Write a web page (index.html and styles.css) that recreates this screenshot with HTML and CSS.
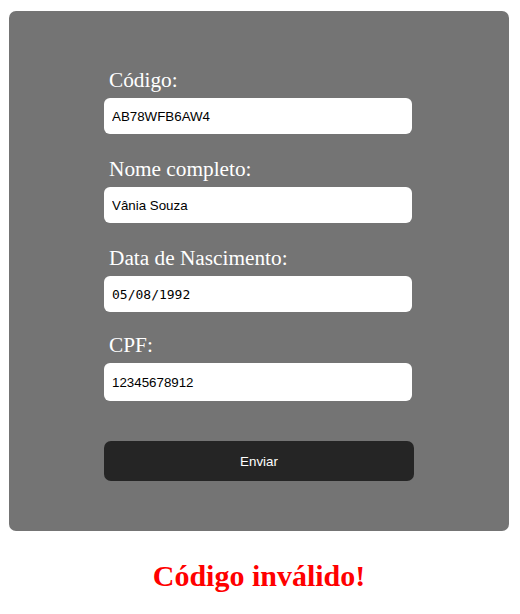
FILE: index.html
```html
<!DOCTYPE html>
<html lang="pt-BR">
<head>
<meta charset="utf-8">
<title>Cadastro</title>
<link rel="stylesheet" href="styles.css">
</head>
<body>
<main class="page">
  <form class="card">
    <div class="fields">
      <div class="field">
        <label class="label" for="codigo">Código:</label>
        <input class="input" id="codigo" type="text" value="AB78WFB6AW4">
      </div>
      <div class="field">
        <label class="label" for="nome">Nome completo:</label>
        <input class="input" id="nome" type="text" value="Vânia Souza">
      </div>
      <div class="field field-tight">
        <label class="label" for="nasc">Data de Nascimento:</label>
        <input class="input input-mono" id="nasc" type="text" value="05/08/1992">
      </div>
      <div class="field">
        <label class="label" for="cpf">CPF:</label>
        <input class="input input-tall" id="cpf" type="text" value="12345678912">
      </div>
      <button class="submit" type="button">Enviar</button>
    </div>
  </form>
  <h2 class="error">Código inválido!</h2>
</main>
</body>
</html>
```

FILE: styles.css
```css
* { box-sizing: border-box; }

html, body {
  margin: 0;
  padding: 0;
  background: #ffffff;
}

.page {
  padding: 11px 11px 0 9px;
  display: flex;
  flex-direction: column;
  align-items: flex-start;
}

.card {
  width: 500px;
  height: 520px;
  background: #747474;
  border-radius: 7px;
  padding: 57px 0 0 0;
  display: flex;
  justify-content: center;
  margin: 0;
}

.fields {
  width: 310px;
  display: flex;
  flex-direction: column;
}

.field {
  display: flex;
  flex-direction: column;
  margin-bottom: 23px;
}

.field-tight {
  margin-bottom: 21px;
}

.label {
  font-family: "Liberation Serif", "Times New Roman", serif;
  font-size: 21.3px;
  line-height: 24px;
  color: #ffffff;
  padding-left: 5px;
  margin-bottom: 6px;
}

.input {
  width: 308px;
  height: 36px;
  border: none;
  border-radius: 6px;
  background: #ffffff;
  padding: 0 8px;
  font-family: "Liberation Sans", Arial, sans-serif;
  font-size: 13.33px;
  color: #000000;
  outline: none;
}

.input-mono {
  font-family: "DejaVu Sans Mono", monospace;
  font-size: 13px;
}

.input-tall {
  height: 38px;
}

.submit {
  margin-top: 17px;
  width: 310px;
  height: 40px;
  border: none;
  border-radius: 7px;
  background: #252525;
  color: #ffffff;
  font-family: "Liberation Sans", Arial, sans-serif;
  font-size: 13.33px;
  cursor: pointer;
}

.error {
  width: 500px;
  margin: 28px 0 0 0;
  text-align: center;
  font-family: "Liberation Serif", "Times New Roman", serif;
  font-weight: bold;
  font-size: 30px;
  line-height: 34px;
  color: #ff0000;
}
```
